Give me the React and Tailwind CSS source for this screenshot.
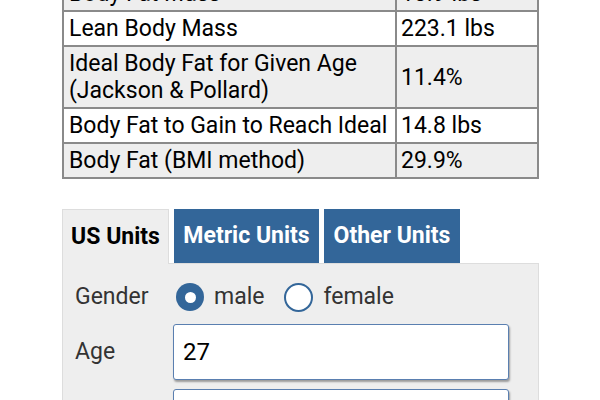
export default function App() {
  const rows = [
    ["Body Fat Mass", "13.9 lbs", true],
    ["Lean Body Mass", "223.1 lbs", false],
    [
      <>
        Ideal Body Fat for Given Age
        <br />
        (Jackson &amp; Pollard)
      </>,
      "11.4%",
      true,
    ],
    ["Body Fat to Gain to Reach Ideal", "14.8 lbs", false],
    ["Body Fat (BMI method)", "29.9%", true],
  ];
  return (
    <div
      className="w-[600px] h-[400px] overflow-hidden bg-white"
      style={{ fontFamily: "Roboto, 'Noto Sans', sans-serif" }}
    >
      <div className="ml-[62px] mt-[-25px] w-[477px]">
        <table className="w-full border-collapse border-2 border-[#8a8a8a] text-[23px] leading-[27px] text-black">
          <tbody>
            {rows.map(([a, b, g], i) => (
              <tr key={i} className={g ? "bg-[#eeeeee]" : "bg-white"}>
                <td className="w-[333px] border-2 border-[#8a8a8a] px-[5px] py-[3px] align-middle">
                  {a}
                </td>
                <td className="border-2 border-[#8a8a8a] px-[4px] py-[3px] align-middle">
                  {b}
                </td>
              </tr>
            ))}
          </tbody>
        </table>

        <div className="mt-[30px]">
          <div className="flex items-end gap-[5px] h-[54px]">
            <div className="relative z-10 -mb-px flex h-[55px] w-[107px] items-center justify-center border border-b-0 border-[#dddddd] bg-[#eeeeee] text-[23px] font-bold text-black">
              US Units
            </div>
            <div className="flex h-[54px] w-[145px] items-center justify-center bg-[#336699] text-[23px] font-bold text-white">
              Metric Units
            </div>
            <div className="flex h-[54px] w-[136px] items-center justify-center bg-[#336699] text-[23px] font-bold text-white">
              Other Units
            </div>
          </div>
          <div className="h-[200px] border border-[#dddddd] bg-[#eeeeee] pl-[12px] pt-[18px]">
            <div className="flex h-[30px] items-center text-[23px] text-[#333333]">
              <div className="w-[101px]">Gender</div>
              <div className="flex items-center gap-[10px]">
                <span className="flex h-[28px] w-[28px] items-center justify-center rounded-full bg-[#336699]">
                  <span className="h-[11px] w-[11px] rounded-full bg-white" />
                </span>
                <span>male</span>
              </div>
              <div className="ml-[20px] flex items-center gap-[10px]">
                <span className="h-[29px] w-[29px] rounded-full border-2 border-[#336699] bg-white" />
                <span>female</span>
              </div>
            </div>
            <div className="mt-[12px] flex items-center">
              <div className="w-[98px] text-[23px] text-[#333333]">Age</div>
              <div className="flex h-[56px] w-[336px] items-center rounded-[3px] border border-[#5a7fb0] bg-white pl-[9px] text-[24px] text-black shadow-[1px_2px_2px_rgba(0,0,0,0.35)]">
                27
              </div>
            </div>
            <div className="mt-[9px] ml-[98px] h-[56px] w-[336px] rounded-[3px] border border-[#5a7fb0] bg-white shadow-[1px_2px_2px_rgba(0,0,0,0.35)]" />
          </div>
        </div>
      </div>
    </div>
  );
}
